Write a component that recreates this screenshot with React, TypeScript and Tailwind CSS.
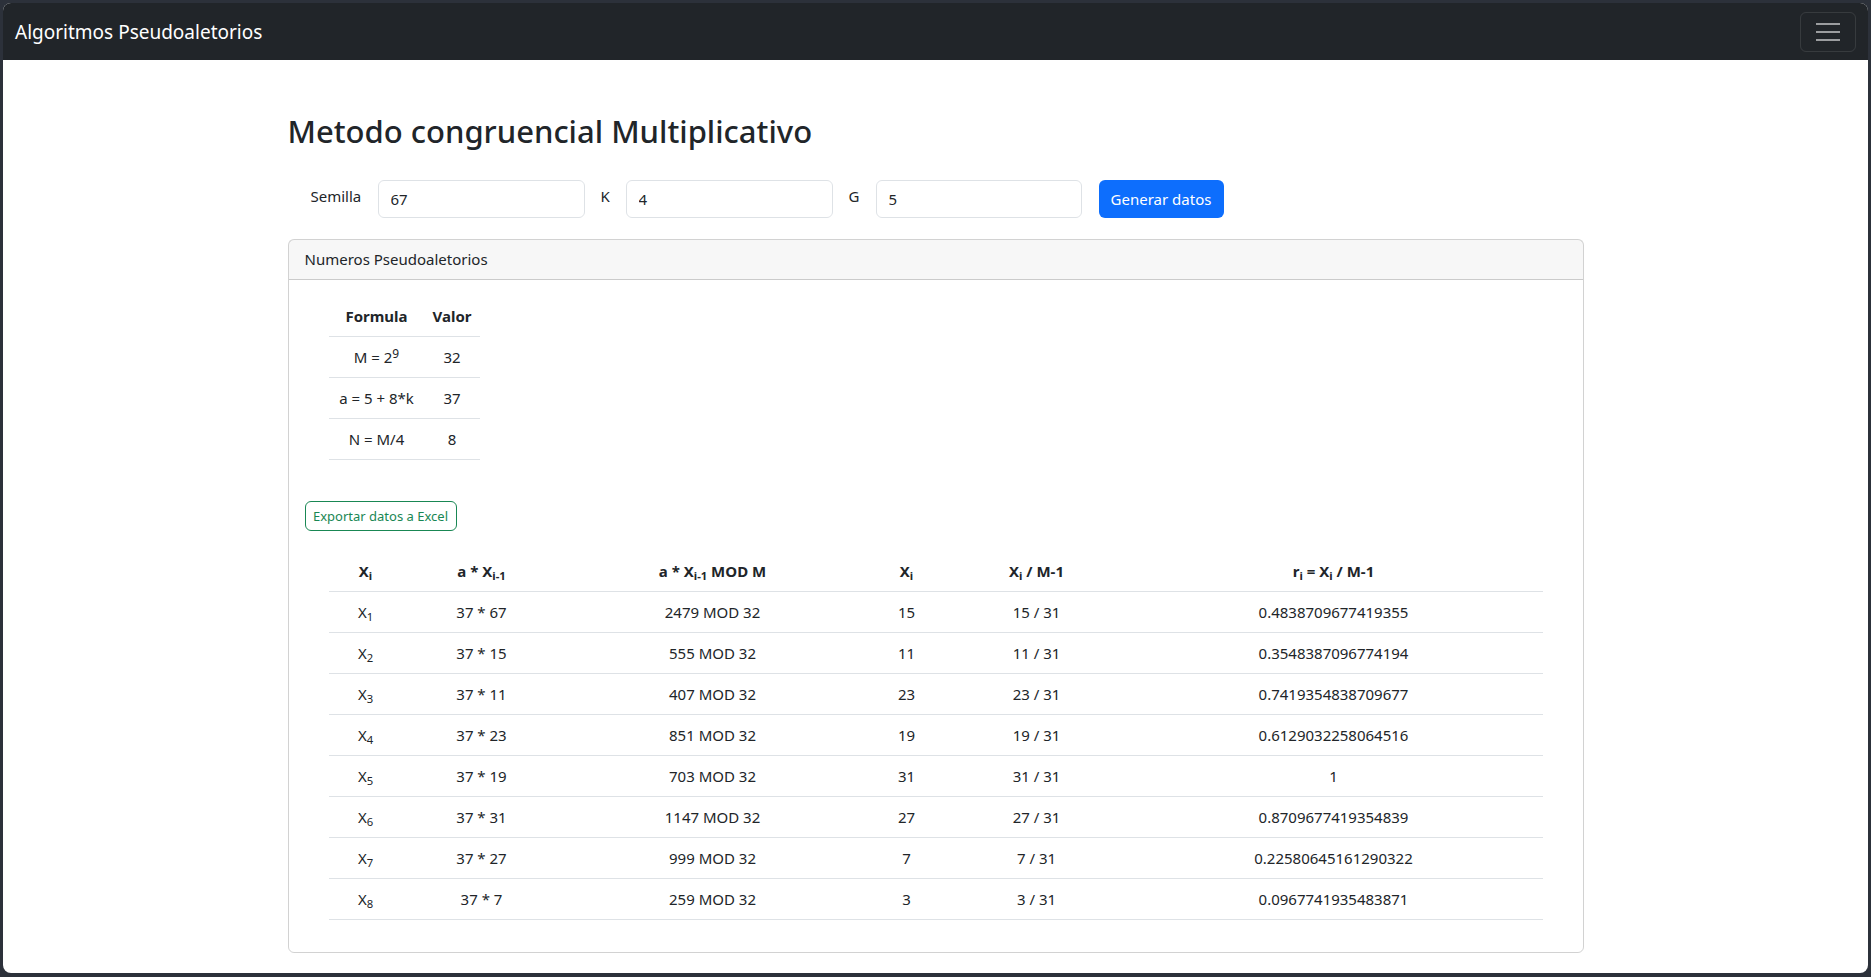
import React from "react";

const rows = [
  { i: 1, prev: 67, prod: 2479, x: 15, r: "0.4838709677419355" },
  { i: 2, prev: 15, prod: 555, x: 11, r: "0.3548387096774194" },
  { i: 3, prev: 11, prod: 407, x: 23, r: "0.7419354838709677" },
  { i: 4, prev: 23, prod: 851, x: 19, r: "0.6129032258064516" },
  { i: 5, prev: 19, prod: 703, x: 31, r: "1" },
  { i: 6, prev: 31, prod: 1147, x: 27, r: "0.8709677419354839" },
  { i: 7, prev: 27, prod: 999, x: 7, r: "0.22580645161290322" },
  { i: 8, prev: 7, prod: 259, x: 3, r: "0.0967741935483871" },
];

function Sub({ children }: { children: React.ReactNode }) {
  return <sub className="relative bottom-[-0.25em] align-baseline text-[0.75em] leading-none">{children}</sub>;
}

export default function App() {
  return (
    <div
      className="h-screen w-full bg-[#2c313a] pt-[3px] px-[3px] pb-[4px] text-[#212529]"
      style={{ fontFamily: '"Noto Sans", "Open Sans", sans-serif' }}
    >
      <div className="flex h-full flex-col overflow-hidden rounded-lg bg-white">
        {/* Navbar */}
        <nav className="flex h-[57px] shrink-0 items-center justify-between bg-[#212529] px-3">
          <span className="text-[19px] leading-[30px] text-white">Algoritmos Pseudoaletorios</span>
          <button className="flex h-[40px] w-[56px] flex-col items-center justify-center gap-[6px] rounded-md border border-white/10">
            <span className="h-[2px] w-[24px] bg-white/55" />
            <span className="h-[2px] w-[24px] bg-white/55" />
            <span className="h-[2px] w-[24px] bg-white/55" />
          </button>
        </nav>

        <div className="mx-auto w-full max-w-[1320px] px-3 pt-[52px] text-[15px]">
          <h2 className="text-[31px] font-medium leading-[38px]">Metodo congruencial Multiplicativo</h2>

          {/* Inputs */}
          <div className="mt-[30px] flex items-start pl-[23px]">
            <label className="w-[67px] pt-[4px] leading-6">Semilla</label>
            <input
              readOnly
              value="67"
              className="h-[38px] w-[207px] rounded-md border border-[#dee2e6] px-3 outline-none"
            />
            <label className="w-[41px] pl-4 pt-[4px] leading-6">K</label>
            <input
              readOnly
              value="4"
              className="h-[38px] w-[207px] rounded-md border border-[#dee2e6] px-3 outline-none"
            />
            <label className="w-[43px] pl-4 pt-[4px] leading-6">G</label>
            <input
              readOnly
              value="5"
              className="h-[38px] w-[206px] rounded-md border border-[#dee2e6] px-3 outline-none"
            />
            <button className="ml-[17px] h-[38px] w-[125px] rounded-md bg-[#0d6efd] text-white">Generar datos</button>
          </div>

          {/* Card */}
          <div className="mt-[21px] rounded-md border border-black/[0.175]">
            <div className="flex h-[40px] items-center border-b border-black/[0.175] bg-black/[0.03] px-4">
              Numeros Pseudoaletorios
            </div>
            <div className="p-4">
              <div className="px-6">
                <table className="mb-[42px] border-collapse text-center">
                  <thead>
                    <tr className="border-b border-[#dee2e6]">
                      <th className="w-[96px] px-2 py-2 font-bold leading-6">Formula</th>
                      <th className="w-[54px] px-2 py-2 font-bold leading-6">Valor</th>
                    </tr>
                  </thead>
                  <tbody>
                    <tr className="border-b border-[#dee2e6]">
                      <td className="px-2 py-2 leading-6">
                        M = 2<sup className="relative top-[-0.45em] align-baseline text-[0.8em] leading-none">9</sup>
                      </td>
                      <td className="px-2 py-2 leading-6">32</td>
                    </tr>
                    <tr className="border-b border-[#dee2e6]">
                      <td className="whitespace-nowrap px-2 py-2 leading-6">a = 5 + 8*k</td>
                      <td className="px-2 py-2 leading-6">37</td>
                    </tr>
                    <tr className="border-b border-[#dee2e6]">
                      <td className="px-2 py-2 leading-6">N = M/4</td>
                      <td className="px-2 py-2 leading-6">8</td>
                    </tr>
                  </tbody>
                </table>
              </div>

              <button className="-mt-[1px] h-[30px] w-[152px] rounded-md border border-[#198754] text-[13px] leading-[21px] text-[#198754]">
                Exportar datos a Excel
              </button>

              <div className="mt-[20px] px-6">
                <table className="mb-4 w-full table-fixed border-collapse text-center">
                  <colgroup>
                    <col className="w-[74px]" />
                    <col className="w-[158px]" />
                    <col className="w-[304px]" />
                    <col className="w-[84px]" />
                    <col className="w-[176px]" />
                    <col />
                  </colgroup>
                  <thead>
                    <tr className="border-b border-[#dee2e6]">
                      <th className="px-2 py-2 font-bold leading-6">
                        X<Sub>i</Sub>
                      </th>
                      <th className="px-2 py-2 font-bold leading-6">
                        a * X<Sub>i-1</Sub>
                      </th>
                      <th className="px-2 py-2 font-bold leading-6">
                        a * X<Sub>i-1</Sub> MOD M
                      </th>
                      <th className="px-2 py-2 font-bold leading-6">
                        X<Sub>i</Sub>
                      </th>
                      <th className="px-2 py-2 font-bold leading-6">
                        X<Sub>i</Sub> / M-1
                      </th>
                      <th className="px-2 py-2 font-bold leading-6">
                        r<Sub>i</Sub> = X<Sub>i</Sub> / M-1
                      </th>
                    </tr>
                  </thead>
                  <tbody>
                    {rows.map((row) => (
                      <tr key={row.i} className="border-b border-[#dee2e6]">
                        <td className="px-2 py-2 leading-6">
                          X<Sub>{row.i}</Sub>
                        </td>
                        <td className="px-2 py-2 leading-6">37 * {row.prev}</td>
                        <td className="px-2 py-2 leading-6">{row.prod} MOD 32</td>
                        <td className="px-2 py-2 leading-6">{row.x}</td>
                        <td className="px-2 py-2 leading-6">{row.x} / 31</td>
                        <td className="px-2 py-2 leading-6">{row.r}</td>
                      </tr>
                    ))}
                  </tbody>
                </table>
              </div>
            </div>
          </div>
        </div>
      </div>
    </div>
  );
}
